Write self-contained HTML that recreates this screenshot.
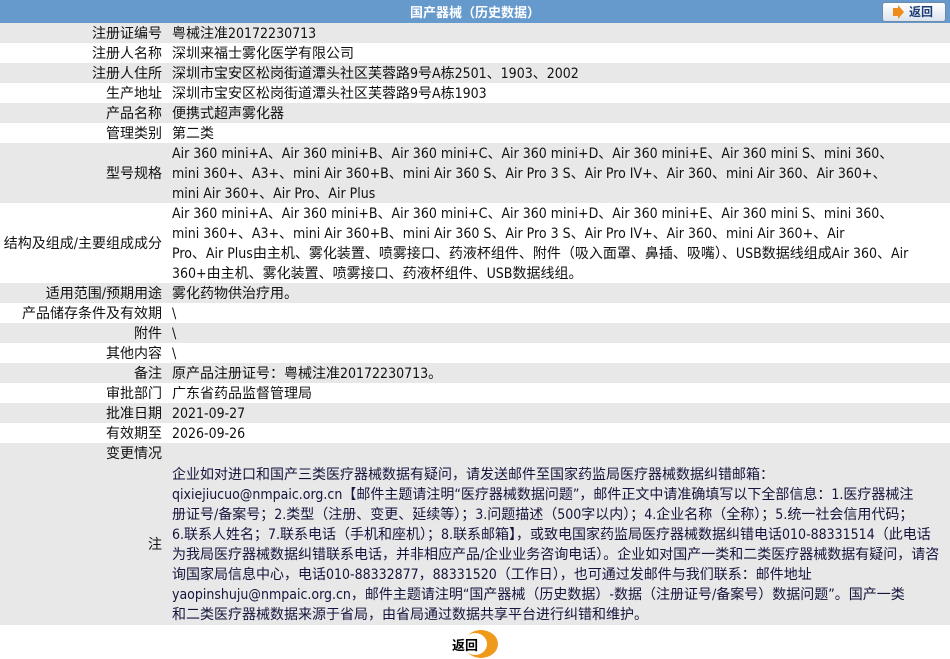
<!DOCTYPE html>
<html><head><meta charset="utf-8">
<style>
body{margin:0;width:950px;height:659px;background:#fff;font-family:"DejaVu Sans Condensed","DejaVu Sans","Noto Sans CJK SC",sans-serif;font-size:14px;color:#111;overflow:hidden}
.hd{height:23px;background:#6699cc;color:#fff;font-weight:bold;text-align:center;line-height:23px;font-size:13px;font-family:"Noto Sans CJK SC",sans-serif;position:relative}
.btn{position:absolute;left:882px;top:2px;width:62px;height:18px;background:linear-gradient(#fff,#dde4ee);border:1px solid #6f8aa8;border-radius:3px;color:#1c3c78;line-height:18px;font-size:12px;text-align:left}
.btn i{display:inline-block;position:absolute;left:10px;top:5px;width:5px;height:8px;background:#f08c1c}
.btn b{position:absolute;left:15px;top:2px;border-left:6px solid #f08c1c;border-top:7px solid transparent;border-bottom:7px solid transparent;width:0;height:0}
.btn span{position:absolute;left:26px}
.r{display:flex;line-height:20px;white-space:nowrap}
.r>div{position:relative;top:1px}
.g{background:#e8e8e8}
.l{width:162px;padding-right:4px;text-align:right;flex:none}
.v{padding-left:6px}
.n{color:#14143c}
.bk{position:absolute;left:452px;top:630px}
.bk .c{position:absolute;left:12px;top:0;width:34px;height:28px;border-radius:50%;background:#f09a1c}
.bk .c2{position:absolute;left:11px;top:3px;width:24px;height:22px;border-radius:50%;background:#fff}
.bk span{position:absolute;left:0;top:5px;font-weight:bold;font-size:13px;color:#000;white-space:nowrap}
</style></head><body>
<div class="hd">国产器械（历史数据）<div class="btn"><i></i><b></b><span>返回</span></div></div>
<div class="r g"><div class="l">注册证编号</div><div class="v">粤械注准20172230713</div></div>
<div class="r"><div class="l">注册人名称</div><div class="v">深圳来福士雾化医学有限公司</div></div>
<div class="r g"><div class="l">注册人住所</div><div class="v">深圳市宝安区松岗街道潭头社区芙蓉路9号A栋2501、1903、2002</div></div>
<div class="r"><div class="l">生产地址</div><div class="v">深圳市宝安区松岗街道潭头社区芙蓉路9号A栋1903</div></div>
<div class="r g"><div class="l">产品名称</div><div class="v">便携式超声雾化器</div></div>
<div class="r"><div class="l">管理类别</div><div class="v">第二类</div></div>
<div class="r g" style="height:60px;align-items:center"><div class="l">型号规格</div><div class="v">Air 360 mini+A、Air 360 mini+B、Air 360 mini+C、Air 360 mini+D、Air 360 mini+E、Air 360 mini S、mini 360、<br>mini 360+、A3+、mini Air 360+B、mini Air 360 S、Air Pro 3 S、Air Pro IV+、Air 360、mini Air 360、Air 360+、<br>mini Air 360+、Air Pro、Air Plus</div></div>
<div class="r" style="height:80px;align-items:center"><div class="l">结构及组成/主要组成成分</div><div class="v">Air 360 mini+A、Air 360 mini+B、Air 360 mini+C、Air 360 mini+D、Air 360 mini+E、Air 360 mini S、mini 360、<br>mini 360+、A3+、mini Air 360+B、mini Air 360 S、Air Pro 3 S、Air Pro IV+、Air 360、mini Air 360+、Air<br>Pro、Air Plus由主机、雾化装置、喷雾接口、药液杯组件、附件（吸入面罩、鼻插、吸嘴）、USB数据线组成Air 360、Air<br>360+由主机、雾化装置、喷雾接口、药液杯组件、USB数据线组。</div></div>
<div class="r g"><div class="l">适用范围/预期用途</div><div class="v">雾化药物供治疗用。</div></div>
<div class="r"><div class="l">产品储存条件及有效期</div><div class="v">\</div></div>
<div class="r g"><div class="l">附件</div><div class="v">\</div></div>
<div class="r"><div class="l">其他内容</div><div class="v">\</div></div>
<div class="r g"><div class="l">备注</div><div class="v">原产品注册证号：粤械注准20172230713。</div></div>
<div class="r"><div class="l">审批部门</div><div class="v">广东省药品监督管理局</div></div>
<div class="r g"><div class="l">批准日期</div><div class="v">2021-09-27</div></div>
<div class="r"><div class="l">有效期至</div><div class="v">2026-09-26</div></div>
<div class="r g"><div class="l">变更情况</div><div class="v"></div></div>
<div class="r g" style="height:162px;align-items:center"><div class="l">注</div><div class="v n">企业如对进口和国产三类医疗器械数据有疑问，请发送邮件至国家药监局医疗器械数据纠错邮箱：<br>qixiejiucuo@nmpaic.org.cn【邮件主题请注明“医疗器械数据问题”，邮件正文中请准确填写以下全部信息：1.医疗器械注<br>册证号/备案号；2.类型（注册、变更、延续等）；3.问题描述（500字以内）；4.企业名称（全称）；5.统一社会信用代码；<br>6.联系人姓名；7.联系电话（手机和座机）；8.联系邮箱】，或致电国家药监局医疗器械数据纠错电话010-88331514（此电话<br>为我局医疗器械数据纠错联系电话，并非相应产品/企业业务咨询电话）。企业如对国产一类和二类医疗器械数据有疑问，请咨<br>询国家局信息中心，电话010-88332877，88331520（工作日），也可通过发邮件与我们联系：邮件地址<br>yaopinshuju@nmpaic.org.cn，邮件主题请注明“国产器械（历史数据）-数据（注册证号/备案号）数据问题”。国产一类<br>和二类医疗器械数据来源于省局，由省局通过数据共享平台进行纠错和维护。</div></div>
<div class="bk"><div class="c"></div><div class="c2"></div><span>返回</span></div>
</body></html>
